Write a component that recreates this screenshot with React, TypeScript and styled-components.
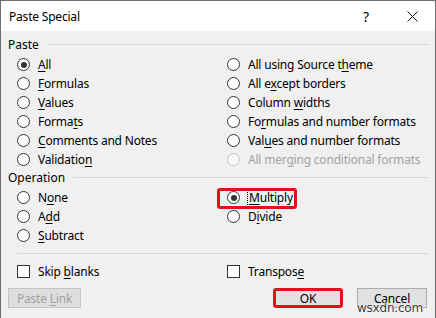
import React from 'react';
import styled, { createGlobalStyle } from 'styled-components';

const Global = createGlobalStyle`
  html, body { margin: 0; padding: 0; background: #ffffff; }
  body { font-family: "Noto Sans", "Open Sans", sans-serif; font-size: 12px; color: #000; }
  * { box-sizing: border-box; }
`;

const Window = styled.div`
  position: relative;
  width: 436px;
  height: 318px;
  border: 1px solid #6e6e6e;
  border-bottom: none;
  background: #f0f0f0;
  display: flex;
  flex-direction: column;
  overflow: hidden;
`;

const TitleBar = styled.div`
  height: 30px;
  flex: none;
  background: #ffffff;
  display: flex;
  align-items: center;
  padding-left: 8px;
`;

const Title = styled.span`
  flex: 1;
  font-size: 12px;
  letter-spacing: -0.2px;
`;

const TitleButton = styled.span`
  width: 46px;
  height: 30px;
  display: flex;
  align-items: center;
  justify-content: center;
  font-size: 14px;
`;

const Body = styled.div`
  flex: 1;
  padding: 5px 6px 0 7px;
  display: flex;
  flex-direction: column;
`;

const GroupHeader = styled.div`
  height: 16px;
  display: flex;
  align-items: center;
  gap: 8px;
  &::after {
    content: '';
    flex: 1;
    height: 1px;
    background: #d7d7d7;
  }
`;

const Options = styled.div`
  display: flex;
  padding-left: 9px;
  margin-top: 3px;
`;

const Column = styled.div<{ $width?: number }>`
  display: flex;
  flex-direction: column;
  width: ${(p) => (p.$width ? `${p.$width}px` : 'auto')};
`;

const OptionRow = styled.label<{ $disabled?: boolean }>`
  height: 19px;
  display: flex;
  align-items: center;
  gap: 8px;
  white-space: nowrap;
  letter-spacing: -0.2px;
  color: ${(p) => (p.$disabled ? '#a3a3a3' : '#000')};
  u { text-underline-offset: 2px; }
`;

const Radio = styled.span<{ $checked?: boolean; $disabled?: boolean }>`
  width: 13px;
  height: 13px;
  flex: none;
  border-radius: 50%;
  border: 1px solid ${(p) => (p.$disabled ? '#c4c4c4' : '#333333')};
  background: ${(p) => (p.$disabled ? '#f7f7f7' : '#ffffff')};
  display: flex;
  align-items: center;
  justify-content: center;
  &::after {
    content: '';
    width: 6px;
    height: 6px;
    border-radius: 50%;
    background: #333333;
    display: ${(p) => (p.$checked ? 'block' : 'none')};
  }
`;

const Checkbox = styled.span`
  width: 13px;
  height: 13px;
  flex: none;
  border: 1px solid #333333;
  background: #ffffff;
`;

const Highlight = styled.span`
  position: relative;
  display: flex;
  &::after {
    content: '';
    position: absolute;
    left: -10px;
    right: -3px;
    top: 0px;
    bottom: -2px;
    border: 3px solid #e3101b;
    border-radius: 3px;
    pointer-events: none;
  }
`;

const FocusText = styled.span`
  outline: 1px dotted #000;
  outline-offset: 0px;
  padding: 0 1px;
`;

const Separator = styled.div`
  height: 1px;
  background: #d7d7d7;
  margin: 8px 0 0 9px;
`;

const CheckRows = styled.div`
  display: flex;
  padding-left: 9px;
  margin-top: 8px;
`;

const ButtonRow = styled.div`
  display: flex;
  align-items: center;
  margin-top: 7px;
  padding-right: 2px;
  gap: 14px;
`;

const Spacer = styled.div`
  flex: 1;
`;

const Button = styled.button<{ $width: number; $disabled?: boolean; $marked?: boolean }>`
  width: ${(p) => p.$width}px;
  height: 20px;
  padding: 0;
  font-family: inherit;
  font-size: 12px;
  letter-spacing: -0.2px;
  white-space: pre;
  color: ${(p) => (p.$disabled ? '#a0a0a0' : '#000')};
  background: ${(p) => (p.$disabled ? '#dedede' : '#e1e1e1')};
  border: ${(p) =>
    p.$marked ? '3px solid #e3101b' : p.$disabled ? '1px solid #c4c4c4' : '1px solid #adadad'};
  border-radius: ${(p) => (p.$marked ? '3px' : '0')};
  display: flex;
  align-items: center;
  justify-content: center;
  u { text-underline-offset: 2px; }
`;

const Watermark = styled.span`
  position: absolute;
  right: 12px;
  bottom: 3px;
  font-family: "DejaVu Sans", sans-serif;
  font-size: 12px;
  letter-spacing: -0.2px;
  color: #3a3a3a;
  text-shadow: 0 0 2px #fff, 0 0 2px #fff, 0 0 1px #fff;
  pointer-events: none;
`;

type OptProps = { label: React.ReactNode; checked?: boolean; disabled?: boolean };

const Opt: React.FC<OptProps> = ({ label, checked, disabled }) => (
  <OptionRow $disabled={disabled}>
    <Radio $checked={checked} $disabled={disabled} />
    <span>{label}</span>
  </OptionRow>
);

export default function App() {
  return (
    <>
      <Global />
      <Window>
        <TitleBar>
          <Title>Paste Special</Title>
          <TitleButton>?</TitleButton>
          <TitleButton>
            <svg width="11" height="11" viewBox="0 0 11 11">
              <path d="M0.5 0.5 L10.5 10.5 M10.5 0.5 L0.5 10.5" stroke="#111" strokeWidth="1" />
            </svg>
          </TitleButton>
        </TitleBar>
        <Body>
          <GroupHeader>Paste</GroupHeader>
          <Options>
            <Column $width={210}>
              <Opt checked label={<><u>A</u>ll</>} />
              <Opt label={<><u>F</u>ormulas</>} />
              <Opt label={<><u>V</u>alues</>} />
              <Opt label={<>Forma<u>t</u>s</>} />
              <Opt label={<><u>C</u>omments and Notes</>} />
              <Opt label={<>Validatio<u>n</u></>} />
            </Column>
            <Column>
              <Opt label={<>All using Source t<u>h</u>eme</>} />
              <Opt label={<>All e<u>x</u>cept borders</>} />
              <Opt label={<>Column <u>w</u>idths</>} />
              <Opt label={<>Fo<u>r</u>mulas and number formats</>} />
              <Opt label={<>Val<u>u</u>es and number formats</>} />
              <Opt disabled label={<>All mer<u>g</u>ing conditional formats</>} />
            </Column>
          </Options>
          <GroupHeader>Operation</GroupHeader>
          <Options>
            <Column $width={210}>
              <Opt label={<>N<u>o</u>ne</>} />
              <Opt label={<>A<u>d</u>d</>} />
              <Opt label={<><u>S</u>ubtract</>} />
            </Column>
            <Column>
              <OptionRow>
                <Highlight>
                  <OptionRow as="span">
                    <Radio $checked />
                    <FocusText><u>M</u>ultiply</FocusText>
                  </OptionRow>
                </Highlight>
              </OptionRow>
              <Opt label={<>D<u>i</u>vide</>} />
            </Column>
          </Options>
          <Separator />
          <CheckRows>
            <Column $width={210}>
              <OptionRow>
                <Checkbox />
                <span>Skip <u>b</u>lanks</span>
              </OptionRow>
            </Column>
            <Column>
              <OptionRow>
                <Checkbox />
                <span>Transpos<u>e</u></span>
              </OptionRow>
            </Column>
          </CheckRows>
          <ButtonRow>
            <Button $width={73} $disabled>
              <span>{'Paste '}<u>L</u>{'ink'}</span>
            </Button>
            <Spacer />
            <Button $width={70} $marked>
              OK
            </Button>
            <Button $width={70}>Cancel</Button>
          </ButtonRow>
        </Body>
        <Watermark>wsxdn.com</Watermark>
      </Window>
    </>
  );
}
